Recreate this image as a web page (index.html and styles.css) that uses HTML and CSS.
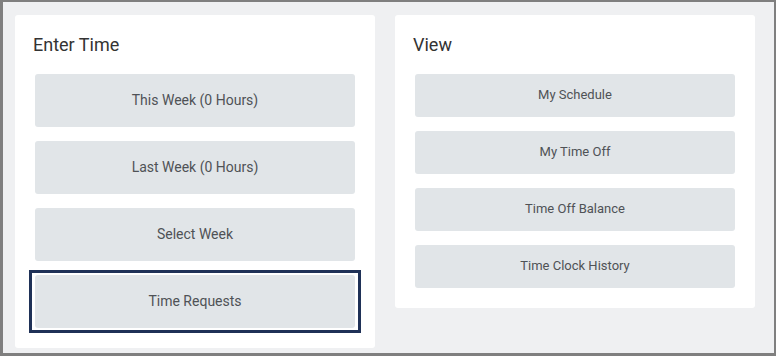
FILE: index.html
```html
<!DOCTYPE html>
<html lang="en">

<head>
    <meta charset="UTF-8">
    <meta name="viewport" content="width=device-width, initial-scale=1.0">
    <title>Time</title>
    <link rel="stylesheet" href="styles.css">
</head>

<body>
    <div class="frame">
        <div class="card">
            <h2>Enter Time</h2>
            <div class="buttons">
                <button class="btn btn-large">This Week (0 Hours)</button>
                <button class="btn btn-large">Last Week (0 Hours)</button>
                <button class="btn btn-large">Select Week</button>
                <button class="btn btn-large focused">Time Requests</button>
            </div>
        </div>

        <div class="card">
            <h2>View</h2>
            <div class="buttons">
                <button class="btn btn-small">My Schedule</button>
                <button class="btn btn-small">My Time Off</button>
                <button class="btn btn-small">Time Off Balance</button>
                <button class="btn btn-small">Time Clock History</button>
            </div>
        </div>
    </div>
</body>

</html>
```

FILE: styles.css
```css
* {
    margin: 0;
    padding: 0;
    box-sizing: border-box;
    font-family: Roboto, "Liberation Sans", Arial, sans-serif;
}

body {
    width: 776px;
    height: 356px;
    background-color: #eff0f2;
}

.frame {
    height: 356px;
    border-style: solid;
    border-color: #7f7f7f;
    border-width: 2px 2px 3px 3px;
    padding: 13px 0 0 12px;
    display: flex;
    align-items: flex-start;
    gap: 20px;
}

.card {
    width: 360px;
    background-color: #fff;
    border-radius: 3px;
    padding: 18px 20px 20px 20px;
}

h2 {
    font-size: 18px;
    font-weight: 400;
    line-height: 24px;
    color: #333;
    margin: 0 0 17px -2px;
}

.buttons {
    display: flex;
    flex-direction: column;
    gap: 14px;
}

.btn {
    position: relative;
    width: 100%;
    border: none;
    border-radius: 3px;
    padding: 0 6px 2px 6px;
    background-color: #e1e5e8;
    color: #4f5256;
    font-size: 14px;
    cursor: pointer;
}

.btn-large {
    height: 53px;
}

.btn-small {
    height: 43px;
    font-size: 13px;
}

.btn:hover {
    background-color: #d6dbdf;
}

/* square focus ring drawn over the button */
.focused::after {
    content: "";
    position: absolute;
    top: -5px;
    left: -6px;
    right: -6px;
    bottom: -5px;
    border: 3px solid #1f3157;
}
```
